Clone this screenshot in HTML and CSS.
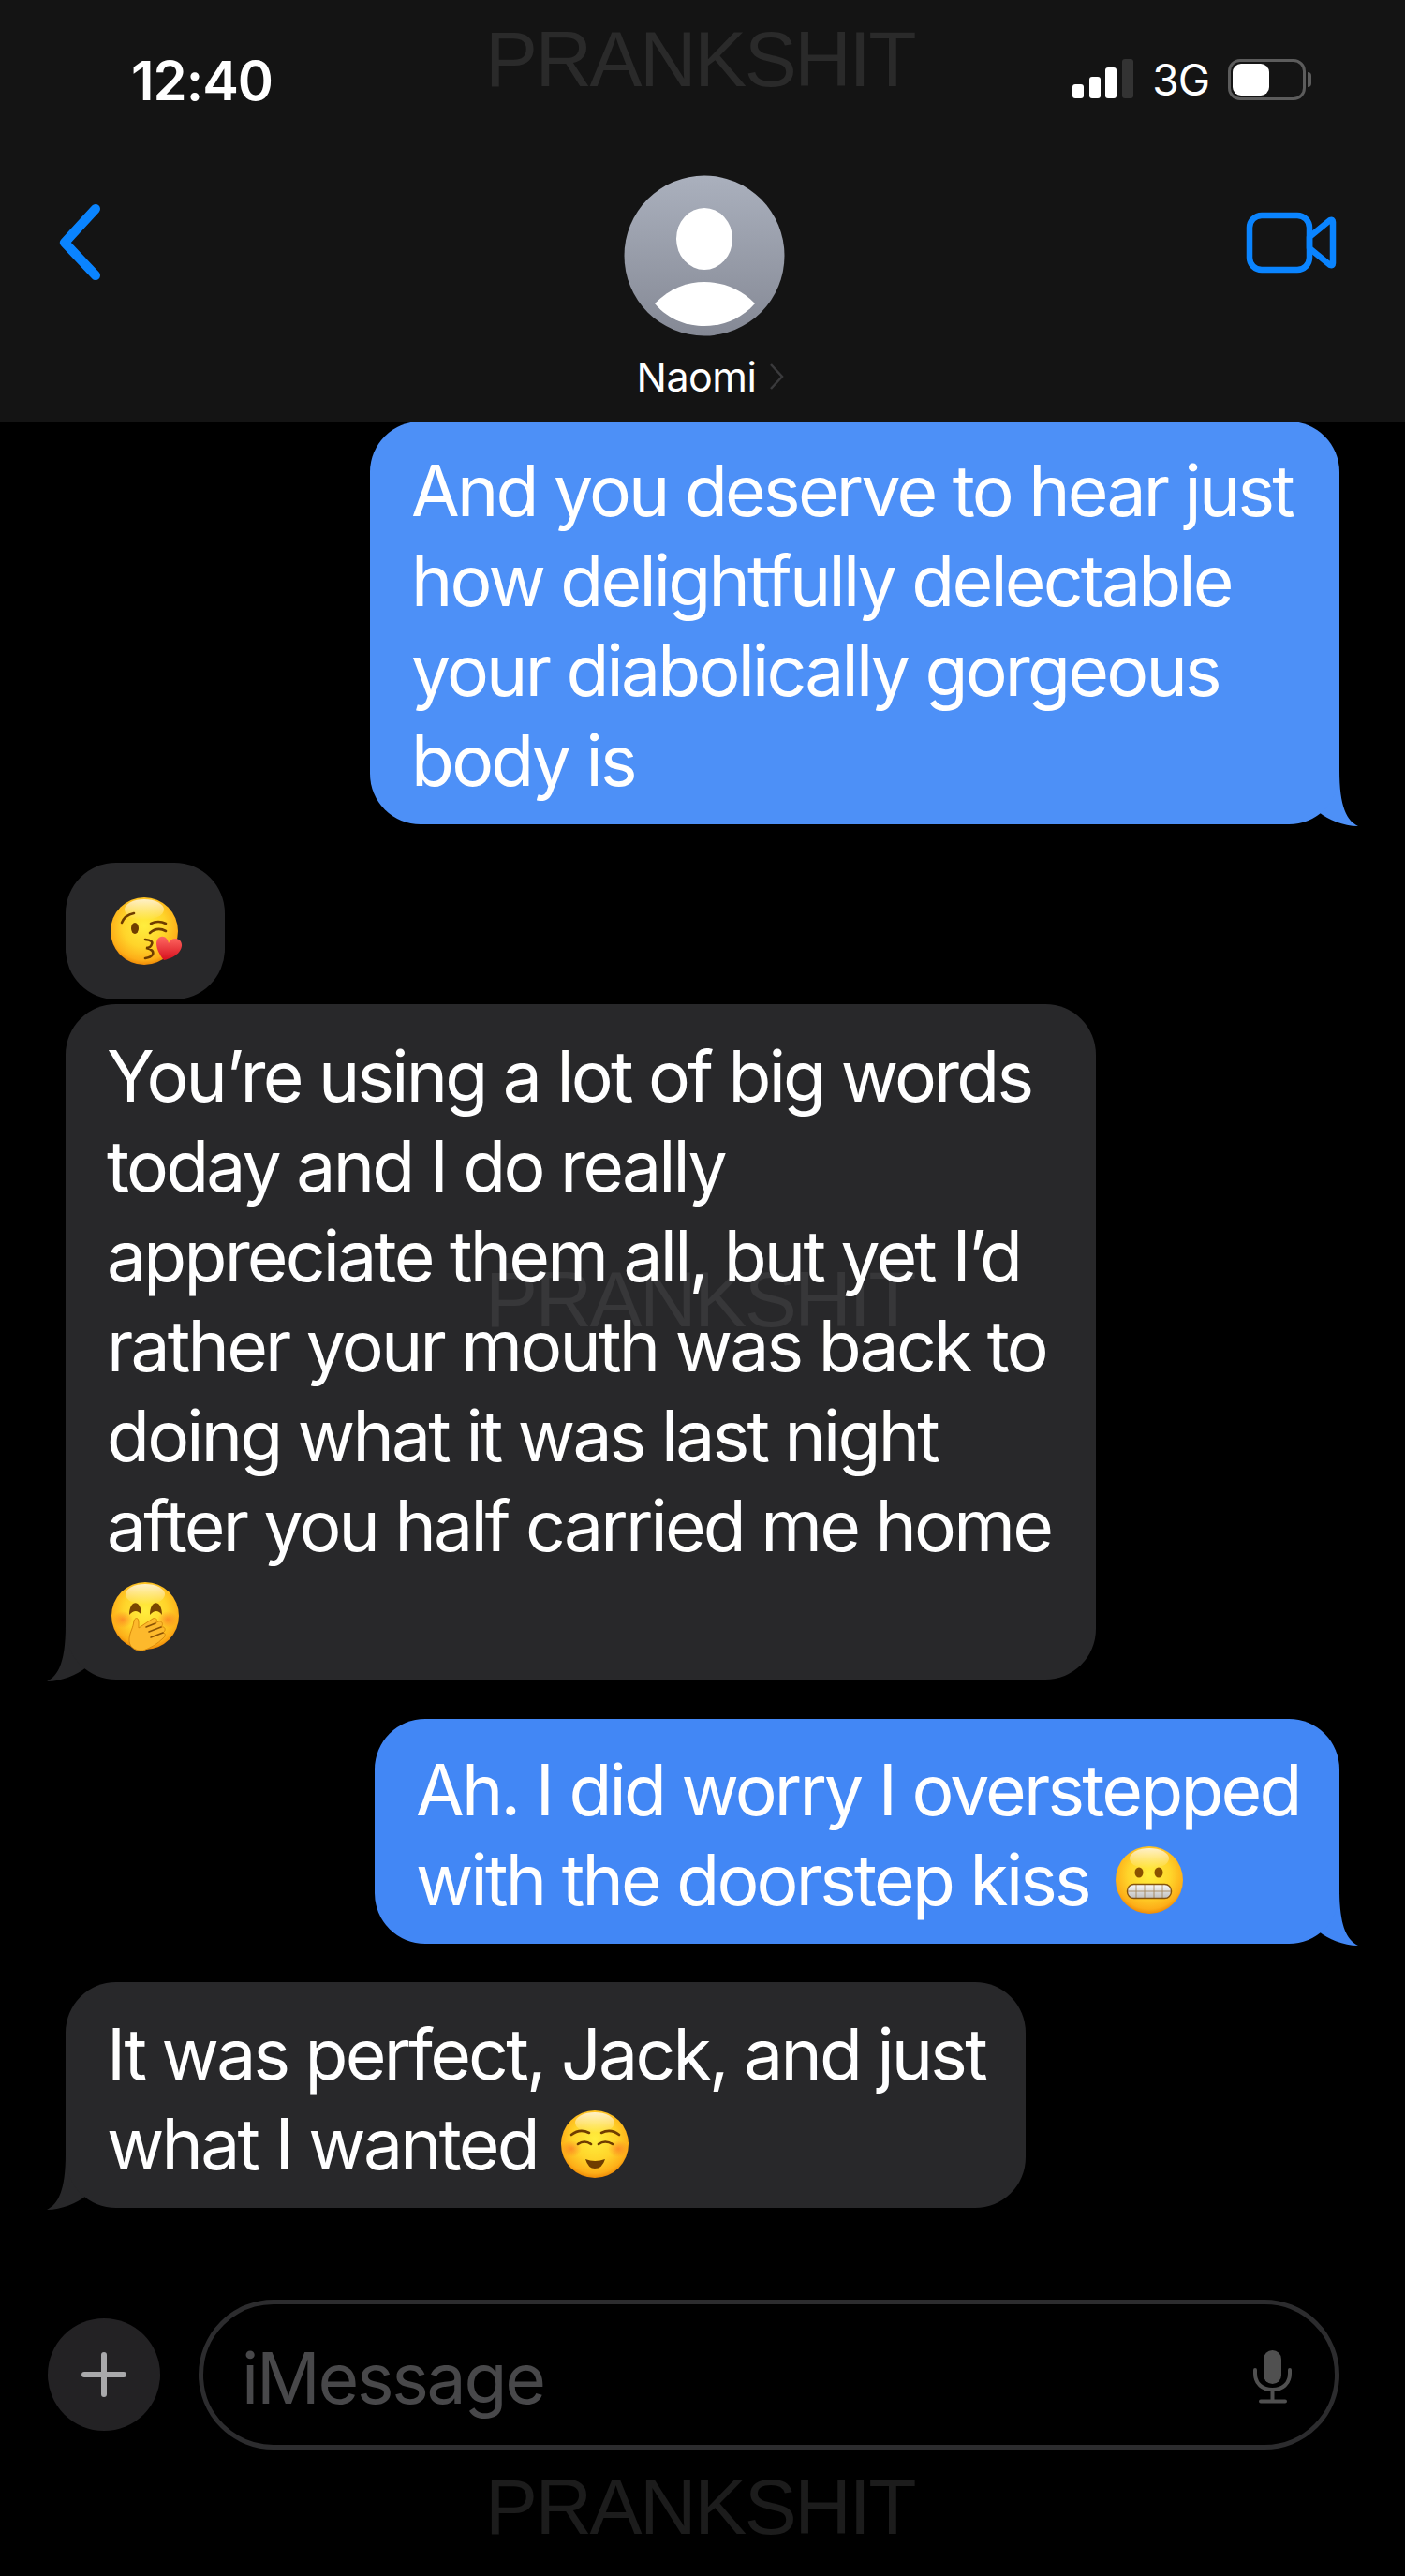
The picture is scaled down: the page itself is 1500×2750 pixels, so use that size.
FILE: index.html
```html
<!DOCTYPE html>
<html lang="en">
<head>
    <meta charset="UTF-8">
    <meta name="viewport" content="width=device-width, initial-scale=1.0">
    <title>Naomi</title>
    <link rel="stylesheet" href="styles.css">
</head>
<body>
    <!-- shared emoji and gradients -->
    <svg class="defs" width="0" height="0">
        <defs>
            <radialGradient id="face" cx="50%" cy="42%" r="58%">
                <stop offset="0" stop-color="#ffee3e"/>
                <stop offset="0.55" stop-color="#ffd42a"/>
                <stop offset="0.88" stop-color="#fdae18"/>
                <stop offset="1" stop-color="#ee8a06"/>
            </radialGradient>
            <linearGradient id="shine" x1="0" y1="0" x2="0" y2="1">
                <stop offset="0" stop-color="#fff" stop-opacity="0.75"/>
                <stop offset="1" stop-color="#fff" stop-opacity="0"/>
            </linearGradient>
            <radialGradient id="blush">
                <stop offset="0" stop-color="#fb6b24" stop-opacity="0.6"/>
                <stop offset="1" stop-color="#fb6b24" stop-opacity="0"/>
            </radialGradient>
            <linearGradient id="heart" x1="0" y1="0" x2="0" y2="1">
                <stop offset="0" stop-color="#ff6a62"/>
                <stop offset="1" stop-color="#d60f1e"/>
            </linearGradient>
            <linearGradient id="teeth" x1="0" y1="0" x2="0" y2="1">
                <stop offset="0" stop-color="#fafafa"/>
                <stop offset="1" stop-color="#bdbdbd"/>
            </linearGradient>
            <linearGradient id="avatar" x1="0" y1="0" x2="0" y2="1">
                <stop offset="0" stop-color="#aab0bd"/>
                <stop offset="1" stop-color="#858995"/>
            </linearGradient>
            <symbol id="base" viewBox="0 0 72 72">
                <circle cx="36" cy="36" r="36" fill="url(#face)"/>
                <ellipse cx="36" cy="13" rx="21" ry="11" fill="url(#shine)"/>
            </symbol>
            <symbol id="e-kiss" viewBox="0 0 72 72" overflow="visible">
                <use href="#base" width="72" height="72"/>
                <g fill="none" stroke="#6f3d00" stroke-width="2.6" stroke-linecap="round">
                    <path d="M12 27Q15 19 25 17"/>
                    <path d="M43 28Q51 24 59 28"/>
                    <path d="M42 38Q50 31 59 36"/>
                    <path d="M37 45Q46 46 44 50Q43 54 38 54Q47 56 45 61Q43 64 37 65"/>
                </g>
                <ellipse cx="26" cy="33" rx="4" ry="6" fill="#6f3d00"/>
                <path d="M62 49C65 41 77 43 76 52C75 60 66 65 57 67C51 60 47 50 50 45C54 39 61 42 62 49Z" fill="url(#heart)"/>
            </symbol>
            <symbol id="e-hand" viewBox="0 0 72 72" overflow="visible">
                <use href="#base" width="72" height="72"/>
                <ellipse cx="12" cy="40" rx="11" ry="9" fill="url(#blush)"/>
                <ellipse cx="60" cy="40" rx="11" ry="9" fill="url(#blush)"/>
                <path d="M19 35C19 18 32 18 32 35Q26 27 19 35Z" fill="#7a4500"/>
                <path d="M41 35C41 18 54 18 54 35Q48 27 41 35Z" fill="#7a4500"/>
                <path d="M19 60C20 52 23 50 24 41C26 37 29 38 29 43L29 49L44 39C48 37 50 41 47 44L50 42C54 41 56 45 53 48C57 47 59 51 55 54C58 54 58 58 55 60C49 66 42 70 34 73C25 74 18 69 19 60Z" fill="#fdb92c" stroke="#d98a0c" stroke-width="1"/>
                <g fill="none" stroke="#8a5204" stroke-width="1.6" stroke-linecap="round">
                    <path d="M37 48L47 44"/>
                    <path d="M40 53L53 48"/>
                    <path d="M42 59L55 54"/>
                </g>
            </symbol>
            <symbol id="e-grimace" viewBox="0 0 72 72">
                <use href="#base" width="72" height="72"/>
                <ellipse cx="25" cy="28" rx="4.5" ry="5.5" fill="#8a5200"/>
                <ellipse cx="46" cy="28" rx="4.5" ry="5.5" fill="#8a5200"/>
                <rect x="12.5" y="40.5" width="47" height="15" rx="7" fill="url(#teeth)" stroke="#85530c" stroke-width="1.4"/>
                <path d="M13 48H59M22 41V55M31 41V55M41 41V55M50 41V55" stroke="#85530c" stroke-width="0.9" opacity="0.6"/>
            </symbol>
            <symbol id="e-relaxed" viewBox="0 0 72 72">
                <use href="#base" width="72" height="72"/>
                <ellipse cx="11" cy="41" rx="11" ry="9" fill="url(#blush)"/>
                <ellipse cx="61" cy="41" rx="11" ry="9" fill="url(#blush)"/>
                <g fill="none" stroke="#6f3d00" stroke-width="2.6" stroke-linecap="round">
                    <path d="M11 26Q20 19 30 24"/>
                    <path d="M43 24Q53 19 62 26"/>
                    <path d="M18 36Q25 31 32 36"/>
                    <path d="M40 36Q47 31 55 36"/>
                </g>
                <path d="M26 52Q36 56 47 52Q44 62 36 62Q29 62 26 52Z" fill="#6f3d00"/>
            </symbol>
            <path id="tail" d="M0 58C20 58 37 55 48 45C58 53 74 60 90 60C78 54 70 40 70 0L0 0Z"/>
        </defs>
    </svg>

    <div class="phone">
        <header class="top">
            <div class="status">
                <span class="clock">12:40</span>
                <div class="status-right">
                    <svg class="signal" width="66" height="44" viewBox="0 0 66 44">
                        <rect x="0" y="27" width="12" height="15" rx="3" fill="#fff"/>
                        <rect x="18" y="19" width="12" height="23" rx="3" fill="#fff"/>
                        <rect x="35" y="9" width="12" height="33" rx="3" fill="#fff"/>
                        <rect x="53" y="0" width="12" height="42" rx="3" fill="#333"/>
                    </svg>
                    <span class="network">3G</span>
                    <div class="battery"><div class="battery-fill"></div></div>
                    <div class="battery-nub"></div>
                </div>
            </div>
            <nav class="nav">
                <svg class="back" width="60" height="96" viewBox="0 0 60 96">
                    <path d="M41 13L8 49L41 84" fill="none" stroke="#0a84ff" stroke-width="10" stroke-linecap="round" stroke-linejoin="round"/>
                </svg>
                <div class="contact">
                    <svg width="172" height="172" viewBox="0 0 172 172">
                        <circle cx="86" cy="86" r="85.5" fill="url(#avatar)"/>
                        <ellipse cx="86" cy="68" rx="30" ry="33" fill="#fff"/>
                        <path d="M33 137C50 120 68 114 86 114C104 114 124 120 140 137C124 155 104 161 86 161C68 161 48 155 33 137Z" fill="#fff"/>
                    </svg>
                    <div class="contact-name">
                        <span>Naomi</span>
                        <svg width="16" height="30" viewBox="0 0 16 30">
                            <path d="M2 2L14 15L2 28" fill="none" stroke="#3a3a3c" stroke-width="2.5"/>
                        </svg>
                    </div>
                </div>
                <svg class="video" width="100" height="66" viewBox="0 0 100 66">
                    <rect x="6" y="4" width="64" height="58" rx="13" fill="none" stroke="#0a84ff" stroke-width="6.5"/>
                    <path d="M70 27L92 9Q95 8 95 11V55Q95 58 92 57L70 39Z" fill="none" stroke="#0a84ff" stroke-width="6.5" stroke-linejoin="round"/>
                </svg>
            </nav>
        </header>

        <main class="thread">
            <div class="bubble sent first msg-a">
                And you deserve to hear just<br>how delightfully delectable<br>your diabolically gorgeous<br>body is
                <svg class="tail" viewBox="0 0 90 60"><use href="#tail"/></svg>
            </div>
            <div class="bubble got msg-b">
                <svg class="emoji solo" viewBox="0 0 72 72"><use href="#e-kiss" width="72" height="72"/></svg>
            </div>
            <div class="bubble got msg-c">
                You’re using a lot of big words<br>today and I do really<br>appreciate them all, but yet I’d<br>rather your mouth was back to<br>doing what it was last night<br>after you half carried me home<br>
                <svg class="emoji" viewBox="0 0 72 72"><use href="#e-hand" width="72" height="72"/></svg>
                <svg class="tail" viewBox="0 0 90 60"><use href="#tail"/></svg>
            </div>
            <div class="bubble sent alt msg-d">
                Ah. I did worry I overstepped<br>with the doorstep kiss
                <svg class="emoji" viewBox="0 0 72 72"><use href="#e-grimace" width="72" height="72"/></svg>
                <svg class="tail" viewBox="0 0 90 60"><use href="#tail"/></svg>
            </div>
            <div class="bubble got msg-e">
                It was perfect, Jack, and just<br>what I wanted
                <svg class="emoji" viewBox="0 0 72 72"><use href="#e-relaxed" width="72" height="72"/></svg>
                <svg class="tail" viewBox="0 0 90 60"><use href="#tail"/></svg>
            </div>
        </main>

        <footer class="composer">
            <button class="plus">
                <svg width="48" height="48" viewBox="0 0 48 48">
                    <path d="M24 3V45M3 24H45" stroke="#a9a9ab" stroke-width="6" stroke-linecap="round"/>
                </svg>
            </button>
            <div class="input">
                <span class="placeholder">iMessage</span>
                <svg class="mic" width="42" height="58" viewBox="0 0 42 58">
                    <rect x="11" y="1" width="19" height="36" rx="9.5" fill="#505050"/>
                    <path d="M2 22V26C2 37 10 43 20.500 43C31 43 39 37 39 26V22M20.500 43V55M8 55.500H34" fill="none" stroke="#505050" stroke-width="4" stroke-linecap="round"/>
                </svg>
            </div>
        </footer>

        <div class="mark mark-top">PRANKSHIT</div>
        <div class="mark mark-mid">PRANKSHIT</div>
        <div class="mark mark-bottom">PRANKSHIT</div>
    </div>
</body>
</html>
```

FILE: styles.css
```css
* {
    box-sizing: border-box;
}
body {
    margin: 0;
    background-color: #000;
    font-family: Inter, "Liberation Sans", sans-serif;
    color: #fff;
}
.defs {
    position: absolute;
}
.phone {
    position: relative;
    width: 1500px;
    height: 2750px;
    overflow: hidden;
}

/* header */
.top {
    height: 450px;
    background-color: #141414;
    padding: 54px 70px 0;
}
.status {
    display: flex;
    justify-content: space-between;
    align-items: center;
    height: 64px;
    padding-left: 70px;
}
.clock {
    font-size: 58px;
    font-weight: 600;
    letter-spacing: -1px;
}
.status-right {
    display: flex;
    align-items: center;
    margin-right: 30px;
    margin-top: -2px;
}
.signal {
    margin-right: 19px;
}
.network {
    font-size: 46px;
    margin-right: 20px;
    letter-spacing: -1px;
}
.battery {
    width: 83px;
    height: 44px;
    border: 3px solid #5c5c5c;
    border-radius: 13px;
    padding: 2px;
}
.battery-fill {
    width: 39px;
    height: 100%;
    background-color: #fff;
    border-radius: 9px;
}
.battery-nub {
    width: 4px;
    height: 16px;
    margin-left: 2px;
    background-color: #5c5c5c;
    border-radius: 0 4px 4px 0;
}
.nav {
    display: flex;
    justify-content: space-between;
    align-items: flex-start;
    margin-top: 69px;
}
.back {
    margin: 23px 0 0 -9px;
}
.contact {
    display: flex;
    flex-direction: column;
    align-items: center;
    margin-left: 54px;
}
.contact svg {
    display: block;
}
.contact-name {
    display: flex;
    align-items: center;
    gap: 14px;
    margin-top: 18px;
    padding-left: 14px;
    font-size: 43px;
    line-height: 50px;
    letter-spacing: -0.5px;
}
.video {
    margin: 39px 2px 0 0;
}

/* messages */
.thread {
    display: flex;
    flex-direction: column;
    padding: 0 70px;
}
.bubble {
    position: relative;
    padding: 26px 0 20px 44px;
    border-radius: 54px;
    font-size: 75px;
    line-height: 96px;
    letter-spacing: -0.037em;
    white-space: nowrap;
}
.sent {
    align-self: flex-end;
    background-color: #4d90f7;
    fill: #4d90f7;
}
.sent.alt {
    background-color: #4287f5;
    fill: #4287f5;
}
.got {
    align-self: flex-start;
    background-color: #28282a;
    fill: #28282a;
}
.tail {
    position: absolute;
    z-index: -1;
    bottom: -2px;
    width: 90px;
    height: 60px;
}
.sent .tail {
    right: -20px;
}
.got .tail {
    left: -20px;
    transform: scaleX(-1);
}
.msg-a {
    width: 1035px;
    height: 430px;
}
.msg-b {
    width: 170px;
    height: 146px;
    margin-top: 41px;
    padding: 0;
    display: flex;
    align-items: center;
    padding-left: 48px;
}
.msg-c {
    width: 1100px;
    height: 721px;
    margin-top: 5px;
    padding-top: 29px;
}
.msg-d {
    width: 1030px;
    height: 240px;
    margin-top: 42px;
    padding-top: 28px;
}
.msg-e {
    width: 1025px;
    height: 241px;
    margin-top: 41px;
    padding-top: 29px;
}
.emoji {
    width: 72px;
    height: 72px;
    overflow: visible;
    vertical-align: -9px;
    margin-left: 7px;
}
.msg-c .emoji {
    margin-left: 5px;
}
.msg-d .emoji {
    margin-left: 10px;
}
.emoji.solo {
    margin: 0;
}

/* input row */
.composer {
    position: absolute;
    top: 2455px;
    left: 51px;
    right: 70px;
    display: flex;
    align-items: center;
    gap: 41px;
}
.plus {
    display: flex;
    align-items: center;
    justify-content: center;
    width: 120px;
    height: 120px;
    padding: 0;
    flex: none;
    background-color: #232224;
    border: none;
    border-radius: 50%;
}
.input {
    flex: 1;
    display: flex;
    justify-content: space-between;
    align-items: center;
    height: 160px;
    padding: 0 45px 0 41px;
    border: 5px solid #2c2c2e;
    border-radius: 80px;
}
.placeholder {
    position: relative;
    top: 3px;
    font-size: 75px;
    letter-spacing: -0.03em;
    color: #48484a;
}
.mic {
    margin-top: 4px;
}

/* watermark */
.mark {
    position: absolute;
    left: 0;
    width: 100%;
    padding-right: 6px;
    text-align: center;
    font-family: "Liberation Sans", sans-serif;
    font-size: 84px;
    line-height: 84px;
    letter-spacing: -2.5px;
}
.mark-top {
    top: 21px;
    color: #2a2a2a;
}
.mark-mid {
    top: 1345px;
    color: rgba(255, 255, 255, 0.07);
}
.mark-bottom {
    top: 2634px;
    color: #1c1c1c;
}
```
